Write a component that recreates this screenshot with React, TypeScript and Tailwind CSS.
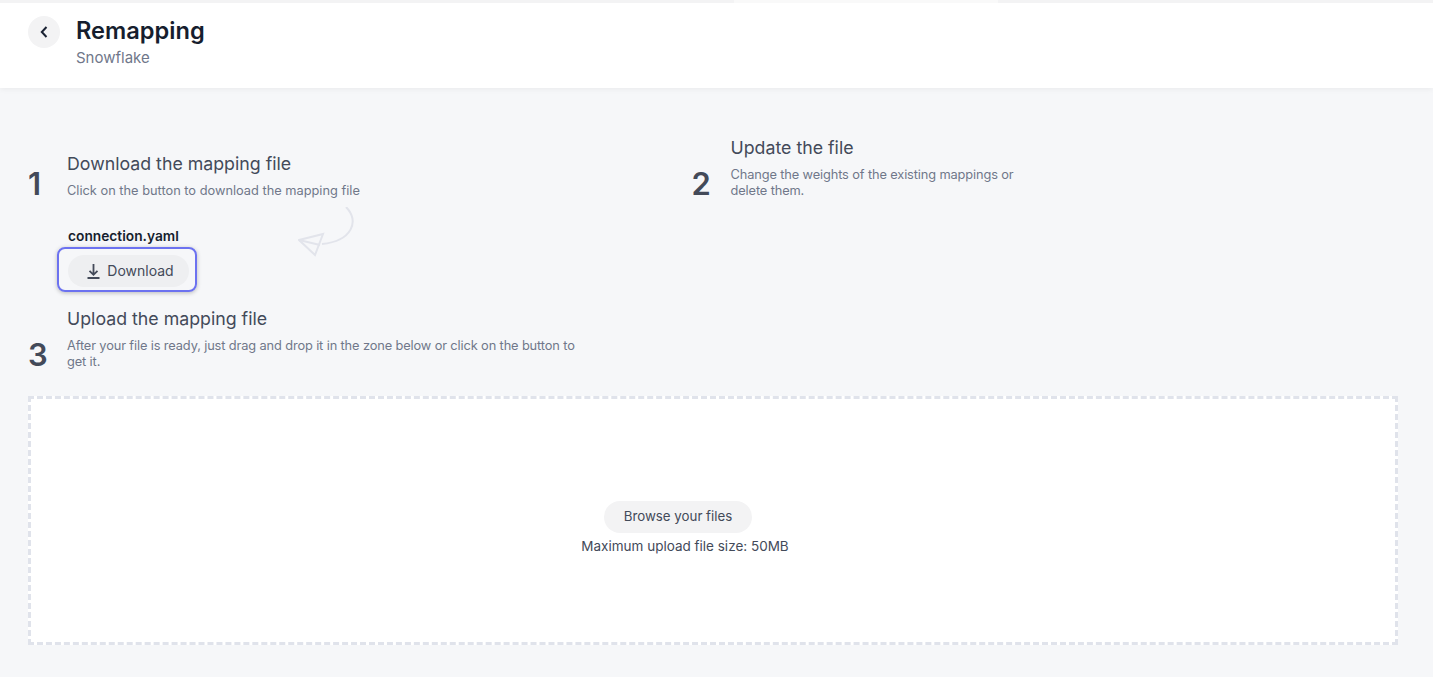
import React from "react";

const font = "font-['Inter','Liberation_Sans',sans-serif]";

function Step({ num, title, tight, children }: { num: string; title: string; tight?: boolean; children: React.ReactNode }) {
	return (
		<div className="flex items-end">
			<div className="w-[39px] shrink-0 text-[31px] leading-[30px] font-semibold text-[#434a59]">{num}</div>
			<div>
				<h2 className="text-[17.75px] leading-[32px] text-[#434a59]">{title}</h2>
				<p className={`mt-[3px] text-[12.8px] leading-4 text-[#70778a] ${tight ? "tracking-[-0.12px]" : ""}`}>{children}</p>
			</div>
		</div>
	);
}

export default function App() {
	return (
		<div className={`${font} h-[677px] overflow-hidden bg-[#f6f7f9]`}>
			{/* Header */}
			<header className="h-[88px] bg-white shadow-[0_1px_6px_rgba(0,0,0,0.06)] relative">
				<div className="h-[3px] flex">
					<div className="w-[734px] bg-[#f3f3f4]" />
					<div className="w-[264px] bg-[#f9f9f9]" />
					<div className="flex-1 bg-[#f3f3f4]" />
				</div>
				<div className="flex pl-[28px] pt-[13px]">
					<button className="w-8 h-8 rounded-full bg-[#f3f3f4] flex items-center justify-center">
						<svg width="9" height="12" viewBox="0 0 9 12" fill="none" stroke="#1a2233" strokeWidth="2">
							<path d="M6.5 1 1.8 6l4.7 5" />
						</svg>
					</button>
					<div className="ml-4">
						<h1 className="text-[23.6px] leading-[30px] font-semibold text-[#161e2e]">Remapping</h1>
						<div className="text-[15px] leading-[24px] text-[#70778a]">Snowflake</div>
					</div>
				</div>
			</header>

			<main className="px-[28px] pt-[44px]">
				<div className="grid grid-cols-[663.5px_1fr] items-end">
					<Step num="1" title="Download the mapping file">
						Click on the button to download the mapping file
					</Step>
					<div className="max-w-[340px]">
						<Step num="2" title="Update the file" tight>
							Change the weights of the existing mappings or delete them.
						</Step>
					</div>
				</div>

				<div className="pl-[40px] mt-[27px] relative">
					<div className="text-[13.75px] leading-5 font-semibold text-[#161e2e]">connection.yaml</div>
					<div className="flex w-fit mt-[1px] -ml-[11px] pt-[6px] pb-[3px] pl-[9px] pr-[6px] rounded-lg border-2 border-[#6c72f0] shadow-[0_1px_4px_rgba(0,0,0,0.25)]">
						<button className="h-8 w-[121px] pl-[4px] rounded-full bg-[#eeeff1] flex items-center justify-center gap-[7px] text-sm text-[#434a59]">
							<svg width="13" height="16" viewBox="0 0 13 16" fill="none" stroke="#434a59" strokeWidth="1.8">
								<path d="M6.5 1v10.5M2.5 7.8l4 4 4-4M0.5 15h12" />
							</svg>
							Download
						</button>
					</div>
					{/* arrow doodle */}
					<svg className="absolute left-[270px] top-[-19px]" width="60" height="50" viewBox="0 0 60 50" fill="none" stroke="#e2e4eb" strokeWidth="2">
						<path d="M48 0C62 14 54 34 24 37" />
						<path d="M1 33 25 27 17 48Z" />
						<path d="M1 33 22 38" />
					</svg>
				</div>

				<div className="mt-[11px] max-w-[560px]">
					<Step num="3" title="Upload the mapping file" tight>
						After your file is ready, just drag and drop it in the zone below or click on the button to get it.
					</Step>
				</div>

				<div className="mt-[26px] h-[249px] w-[1370px] bg-white border-[3px] border-dashed border-[#e0e3eb] flex flex-col items-center justify-center pt-[16px] pr-[56px]">
					<button className="h-8 -ml-[14px] w-[148px] rounded-full bg-[#f3f3f4] text-[13.3px] text-[#434a59]">Browse your files</button>
					<div className="mt-[3px] text-[13.5px] leading-5 text-[#434a59]">Maximum upload file size: 50MB</div>
				</div>
			</main>
		</div>
	);
}
